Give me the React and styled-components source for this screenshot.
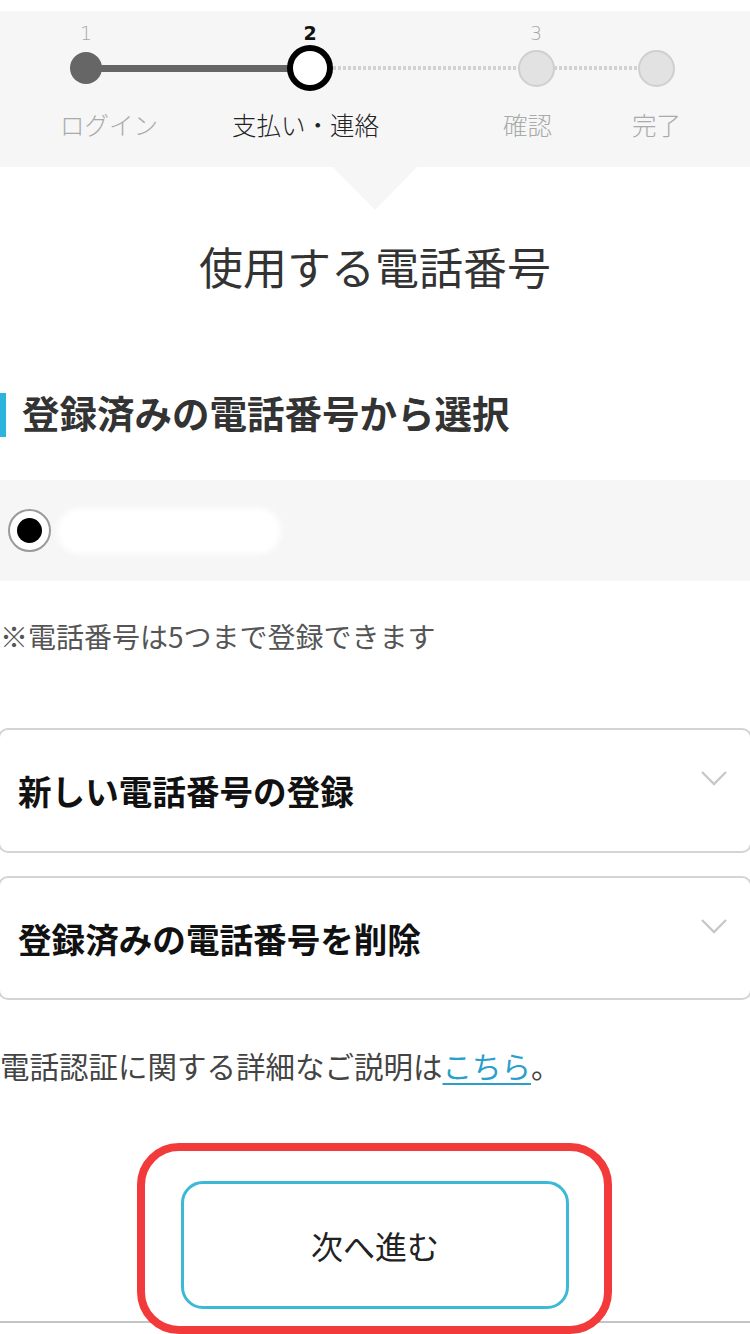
import React from "react";
import styled, { createGlobalStyle } from "styled-components";

const GlobalStyle = createGlobalStyle`
  html, body {
    margin: 0;
    padding: 0;
    background: #ffffff;
  }
  body {
    font-family: "Noto Sans CJK JP", "Noto Sans", sans-serif;
    color: #333;
    overflow-x: hidden;
  }
`;

const Page = styled.div`
  width: 750px;
  min-height: 1334px;
  display: flex;
  flex-direction: column;
  overflow: hidden;
  padding-top: 11px;
  box-sizing: border-box;
`;

const StepBand = styled.div`
  background: #f6f6f6;
  padding: 10px 0 27px;
  display: flex;
  flex-direction: column;
`;

const Track = styled.div`
  display: flex;
  align-items: flex-end;
  padding-left: 63px;
`;

const Step = styled.div`
  width: 46px;
  display: flex;
  flex-direction: column;
  align-items: center;
  position: relative;
  z-index: 1;
`;

const StepNum = styled.div`
  height: 24px;
  line-height: 24px;
  font-family: "DejaVu Sans", "Noto Sans", sans-serif;
  font-size: 19px;
  font-weight: ${(p) => (p.$active ? 700 : 300)};
  color: ${(p) => (p.$active ? "#111" : "#a8a8a8")};
`;

const Slot = styled.div`
  width: 46px;
  height: 46px;
  display: flex;
  align-items: center;
  justify-content: center;
`;

const Dot = styled.div`
  box-sizing: border-box;
  width: ${(p) => p.$size}px;
  height: ${(p) => p.$size}px;
  border-radius: 50%;
  ${(p) =>
    p.$state === "done" &&
    `
    background: #666;
  `}
  ${(p) =>
    p.$state === "current" &&
    `
    background: #fff;
    border: 6px solid #000;
  `}
  ${(p) =>
    p.$state === "todo" &&
    `
    background: #e2e2e2;
    border: 2px solid #cfcfcf;
  `}
`;

const Connector = styled.div`
  width: ${(p) => p.$width}px;
  margin: 0 -10px 19px;
  height: 7px;
  ${(p) =>
    p.$dotted
      ? `
    height: 4px;
    margin-bottom: 21px;
    background: repeating-linear-gradient(90deg, #d2d2d2 0 3px, transparent 3px 5px);
  `
      : `
    background: #666;
  `}
`;

const Labels = styled.div`
  display: flex;
  margin-top: 19px;
`;

const StepLabel = styled.div`
  margin-left: ${(p) => p.$offset}px;
  font-size: 24.5px;
  line-height: 30px;
  font-weight: 300;
  color: ${(p) => (p.$active ? "#222" : "#aaa")};
  white-space: nowrap;
`;

const Pointer = styled.div`
  align-self: center;
  width: 0;
  height: 0;
  border-left: 42px solid transparent;
  border-right: 42px solid transparent;
  border-top: 43px solid #f6f6f6;
`;

const Title = styled.h1`
  margin: 26px 0 0;
  text-align: center;
  font-size: 44px;
  line-height: 60px;
  font-weight: 400;
  color: #333;
`;

const SectionHeading = styled.h2`
  margin: 97px 0 0;
  height: 44px;
  box-sizing: border-box;
  display: flex;
  align-items: center;
  border-left: 6px solid #2bb5dc;
  padding: 0 0 8px 16px;
  font-size: 37.5px;
  font-weight: 700;
  color: #333;
`;

const OptionRow = styled.div`
  margin-top: 43px;
  height: 101px;
  background: #f6f6f6;
  display: flex;
  align-items: center;
  padding-left: 8px;
  gap: 6px;
`;

const Radio = styled.div`
  box-sizing: border-box;
  width: 43px;
  height: 43px;
  border-radius: 50%;
  border: 2px solid #9a9a9a;
  background: #fff;
  display: flex;
  align-items: center;
  justify-content: center;
  flex-shrink: 0;

  &::after {
    content: "";
    width: 25px;
    height: 25px;
    border-radius: 50%;
    background: #000;
  }
`;

const Masked = styled.div`
  width: 224px;
  height: 46px;
  border-radius: 23px;
  background: #fff;
  filter: blur(3px);
`;

const Note = styled.p`
  margin: 35px 0 0;
  font-size: 28px;
  line-height: 40px;
  color: #555;
  white-space: nowrap;
`;

const Accordion = styled.div`
  margin: ${(p) => p.$gap}px -2px 0;
  height: ${(p) => p.$height}px;
  box-sizing: border-box;
  border: 2px solid #d4d4d4;
  border-radius: 10px;
  display: flex;
  align-items: center;
  justify-content: space-between;
  padding: 0 22px 0 18px;
`;

const AccordionTitle = styled.span`
  font-size: 33.6px;
  font-weight: 700;
  color: #111;
`;

const Chevron = styled.svg`
  align-self: flex-start;
  margin-top: 40px;
  width: 28px;
  height: 16px;
`;

const Info = styled.p`
  margin: 45px 0 0;
  font-size: 29.5px;
  line-height: 40px;
  color: #444;
  white-space: nowrap;
`;

const Link = styled.a`
  color: #2a9fcb;
  text-decoration: underline;
  text-underline-offset: 5px;
  text-decoration-thickness: 2px;
`;

const ButtonArea = styled.div`
  margin-top: 58px;
  display: flex;
  justify-content: center;
  position: relative;

  &::after {
    content: "";
    position: absolute;
    left: 0;
    right: 0;
    bottom: 11px;
    height: 2px;
    background: #c4c4c4;
  }
`;

const Highlight = styled.div`
  position: relative;
  z-index: 1;
  margin-left: -1px;
  background: #fff;
  border: 8px solid #f33a3a;
  border-radius: 42px;
  padding: 30px 35px 17px 36px;
`;

const NextButton = styled.button`
  width: 388px;
  height: 128px;
  box-sizing: border-box;
  border: 3px solid #3bb9d6;
  border-radius: 22px;
  background: #fff;
  font-family: "Noto Sans CJK JP", "Noto Sans", sans-serif;
  font-size: 32px;
  color: #222;
  cursor: pointer;
`;

const steps = [
  { num: "1", state: "done", size: 32 },
  { num: "2", state: "current", size: 46 },
  { num: "3", state: "todo", size: 37 },
  { num: "", state: "todo", size: 37 },
];

// widths include the 20px eaten by the negative margins
const connectors = [
  { width: 198, dotted: false },
  { width: 200, dotted: true },
  { width: 94, dotted: true },
];

const labels = [
  { text: "ログイン", offset: 60 },
  { text: "支払い・連絡", offset: 74, active: true },
  { text: "確認", offset: 124 },
  { text: "完了", offset: 80 },
];

function ChevronDown() {
  return (
    <Chevron viewBox="0 0 28 16">
      <polyline
        points="2,2 14,14 26,2"
        fill="none"
        stroke="#c8c8c8"
        strokeWidth="2.4"
      />
    </Chevron>
  );
}

export default function App() {
  return (
    <Page>
      <GlobalStyle />
      <StepBand>
        <Track>
          {steps.map((s, i) => (
            <React.Fragment key={i}>
              <Step>
                <StepNum $active={s.state === "current"}>{s.num}</StepNum>
                <Slot>
                  <Dot $state={s.state} $size={s.size} />
                </Slot>
              </Step>
              {connectors[i] && (
                <Connector
                  $width={connectors[i].width}
                  $dotted={connectors[i].dotted}
                />
              )}
            </React.Fragment>
          ))}
        </Track>
        <Labels>
          {labels.map((l) => (
            <StepLabel key={l.text} $offset={l.offset} $active={l.active}>
              {l.text}
            </StepLabel>
          ))}
        </Labels>
      </StepBand>
      <Pointer />

      <Title>使用する電話番号</Title>

      <SectionHeading>登録済みの電話番号から選択</SectionHeading>

      <OptionRow>
        <Radio />
        <Masked />
      </OptionRow>

      <Note>※電話番号は5つまで登録できます</Note>

      <Accordion $gap={72} $height={125}>
        <AccordionTitle>新しい電話番号の登録</AccordionTitle>
        <ChevronDown />
      </Accordion>
      <Accordion $gap={23} $height={124}>
        <AccordionTitle>登録済みの電話番号を削除</AccordionTitle>
        <ChevronDown />
      </Accordion>

      <Info>
        電話認証に関する詳細なご説明は<Link href="#">こちら</Link>。
      </Info>

      <ButtonArea>
        <Highlight>
          <NextButton>次へ進む</NextButton>
        </Highlight>
      </ButtonArea>
    </Page>
  );
}
